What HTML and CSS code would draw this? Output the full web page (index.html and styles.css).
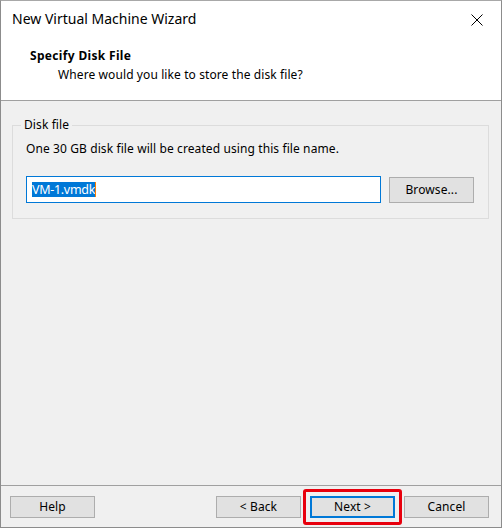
FILE: index.html
```html
<!DOCTYPE html>
<html>
<head>
<meta charset="utf-8">
<link rel="stylesheet" href="styles.css">
</head>
<body>
<div class="window">
  <div class="header">
    <div class="titlebar">
      <span class="title">New Virtual Machine Wizard</span>
      <svg class="close" width="12" height="12" viewBox="0 0 12 12"><path d="M0.5 0.5 L11.5 11.5 M11.5 0.5 L0.5 11.5" stroke="#000" stroke-width="1"/></svg>
    </div>
    <div class="heading">Specify Disk File</div>
    <div class="subheading">Where would you like to store the disk file?</div>
  </div>
  <div class="body">
    <fieldset class="group">
      <legend>Disk file</legend>
      <div class="desc">One 30 GB disk file will be created using this file name.</div>
      <div class="filerow">
        <div class="input"><span class="sel">VM-1.vmdk</span><span class="caret"></span></div>
        <button class="btn browse">Browse...</button>
      </div>
    </fieldset>
  </div>
  <div class="footer">
    <button class="btn">Help</button>
    <div class="spacer"></div>
    <button class="btn">&lt; Back</button>
    <div class="hl"><button class="btn default">Next &gt;</button></div>
    <button class="btn">Cancel</button>
  </div>
</div>
</body>
</html>
```
FILE: styles.css
```css
html, body { margin: 0; padding: 0; background: #ffffff; }
body { font-family: "Noto Sans", "Liberation Sans", sans-serif; font-size: 12px; color: #000; letter-spacing: 0.1px; }
.window {
  width: 502px; height: 528px; box-sizing: border-box;
  border: 1px solid #8c8c8c; border-top-color: #a8a8a8;
  display: flex; flex-direction: column; background: #f0f0f0;
}
.header { background: #fff; height: 100px; border-bottom: 1px solid #a0a0a0; box-sizing: border-box; flex: none; }
.titlebar { height: 37px; display: flex; align-items: center; padding-left: 11px; padding-right: 18px; }
.title { font-size: 14px; flex: 1; color: #000; position: relative; top: -1px; letter-spacing: 0; }
.close { display: block; }
.heading { font-weight: bold; margin-left: 29px; margin-top: 10px; line-height: 16px; letter-spacing: 0.33px; }
.subheading { margin-left: 57px; margin-top: 3px; line-height: 16px; color: #000; }
.body { flex: 1; padding: 17px 12px 0 11px; }
.group {
  margin: 0; padding: 0 12px 0 13px; height: 101px; box-sizing: border-box;
  border: 1px solid #dcdcdc; border-radius: 0; width: 477px; min-width: 0;
}
.group legend { padding: 0 3px; margin-left: -5px; line-height: 14px; }
.desc { margin-top: 9px; line-height: 16px; }
.filerow { display: flex; align-items: center; margin-top: 19px; }
.input {
  width: 355px; height: 27px; box-sizing: border-box; background: #fff;
  border: 1px solid #0078d7; display: flex; align-items: center; padding-left: 5px;
}
.sel { background: #0078d7; color: #fff; font-size: 12.5px; line-height: 15px; letter-spacing: -0.3px; }
.caret { width: 1px; height: 15px; background: #ff7f00; }
.btn {
  font-family: inherit; font-size: 12px; color: #000; letter-spacing: 0.1px;
  width: 85px; height: 22px; box-sizing: border-box;
  background: #e1e1e1; border: 1px solid #adadad; padding: 0; margin: 0;
}
.browse { margin-left: 8px; height: 26px; }
.footer {
  height: 42px; border-top: 1px solid #a0a0a0; display: flex; align-items: center;
  padding: 0 12px 0 9px; box-sizing: border-box; flex: none;
}
.spacer { flex: 1; }
.hl {
  margin: 0 2px; padding: 4px 4px; border: 3px solid #e8000d; border-radius: 3px;
  display: flex;
}
.default { border: 2px solid #0078d7; }
```
